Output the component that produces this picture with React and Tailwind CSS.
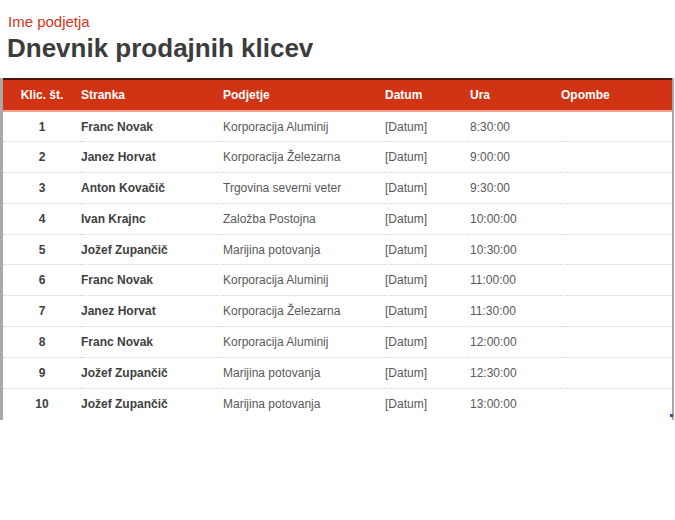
const rows = [
  [1, "Franc Novak", "Korporacija Aluminij", "8:30:00"],
  [2, "Janez Horvat", "Korporacija Železarna", "9:00:00"],
  [3, "Anton Kovačič", "Trgovina severni veter", "9:30:00"],
  [4, "Ivan Krajnc", "Založba Postojna", "10:00:00"],
  [5, "Jožef Zupančič", "Marijina potovanja", "10:30:00"],
  [6, "Franc Novak", "Korporacija Aluminij", "11:00:00"],
  [7, "Janez Horvat", "Korporacija Železarna", "11:30:00"],
  [8, "Franc Novak", "Korporacija Aluminij", "12:00:00"],
  [9, "Jožef Zupančič", "Marijina potovanja", "12:30:00"],
  [10, "Jožef Zupančič", "Marijina potovanja", "13:00:00"],
];

export default function App() {
  return (
    <div className="w-[675px] h-[520px] bg-white font-['Liberation_Sans',Arial,sans-serif]">
      <div className="px-[8px] pt-[13px]">
        <div className="text-[15px] leading-[18px] text-[#d6341a]">Ime podjetja</div>
        <h1 className="-ml-[1px] mt-[1px] text-[26px] leading-[32px] font-bold text-[#3c3c3c]">
          Dnevnik prodajnih klicev
        </h1>
      </div>
      <div className="relative mt-[14px] w-[674px] border-l-[3px] border-r-[2px] border-[#a8a8a8]">
        <table className="w-full border-collapse text-[12px]">
          <thead>
            <tr className="h-[32px] bg-[#d13414] text-white font-bold border-t-[2px] border-t-[#4d150c] border-b-[2px] border-b-[#f0a08c]">
              <th className="w-[78px] text-center font-bold">Klic. št.</th>
              <th className="w-[142px] text-left font-bold">Stranka</th>
              <th className="w-[162px] text-left font-bold">Podjetje</th>
              <th className="w-[85px] text-left font-bold">Datum</th>
              <th className="w-[91px] text-left font-bold">Ura</th>
              <th className="text-left font-bold">Opombe</th>
            </tr>
          </thead>
          <tbody>
            {rows.map((r, i) => (
              <tr
                key={r[0]}
                className={
                  "h-[30.8px] " +
                  (i < rows.length - 1 ? "border-b border-dotted border-b-[#d4d4d4]" : "")
                }
              >
                <td className="text-center font-bold text-[#404040]">{r[0]}</td>
                <td className="font-bold text-[#404040]">{r[1]}</td>
                <td className="text-[#595959]">{r[2]}</td>
                <td className="text-[#595959]">[Datum]</td>
                <td className="text-[#595959]">{r[3]}</td>
                <td></td>
              </tr>
            ))}
          </tbody>
        </table>
        <div className="h-[1px]"></div>
        <div className="absolute right-[-1px] bottom-[3px] h-[3px] w-[3px] bg-[#2a4fb5]"></div>
      </div>
    </div>
  );
}
